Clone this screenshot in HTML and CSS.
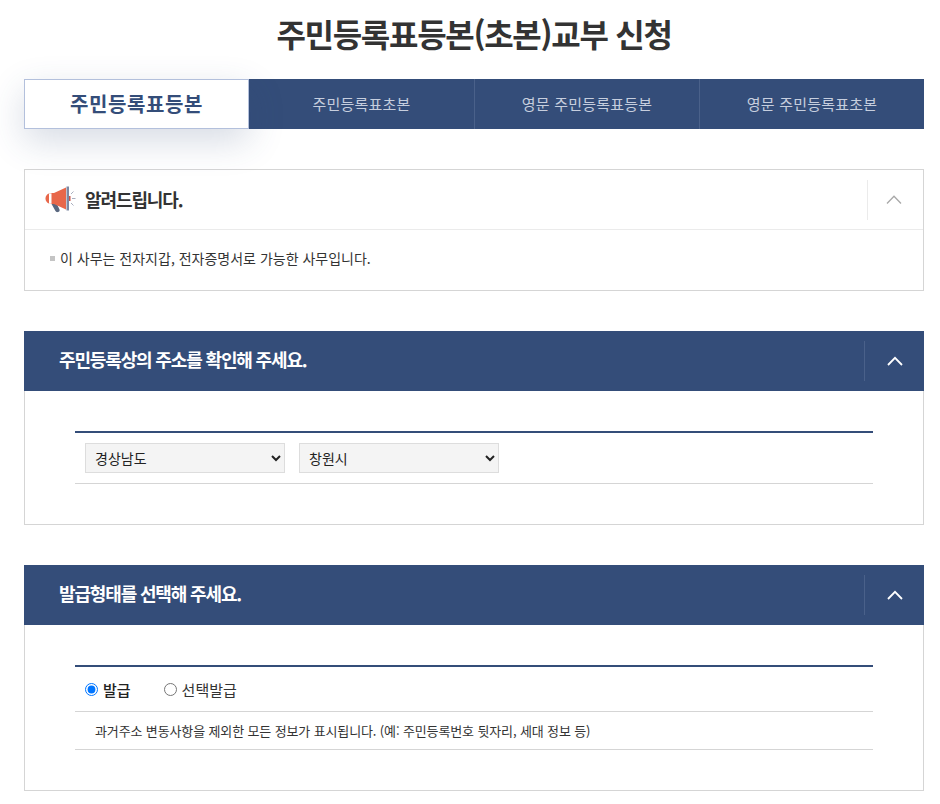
FILE: index.html
```html
<!DOCTYPE html>
<html lang="ko">
<head>
<meta charset="utf-8">
<title>주민등록표등본(초본)교부 신청</title>
<link rel="stylesheet" href="styles.css">
</head>
<body>
<main class="page">
  <h1 class="title">주민등록표등본(초본)교부 신청</h1>
  <ul class="tabs">
    <li class="tab active">주민등록표등본</li>
    <li class="tab">주민등록표초본</li>
    <li class="tab">영문 주민등록표등본</li>
    <li class="tab">영문 주민등록표초본</li>
  </ul>

  <section class="notice">
    <header class="notice-head">
      <svg class="mega" width="32" height="28" viewBox="0 0 32 28" aria-hidden="true">
        <path d="M7 18l5-1 3.500 7.500c.5 1.200-.2 2.300-1.500 2.600-1.200.3-2.200-.2-2.700-1.300z" fill="#59677f"/>
        <path d="M7 8h3v11H7c-3 0-5.500-2.400-5.500-5.500S4 8 7 8z" fill="#e8674a"/>
        <path d="M5 8.300h2.500v10.500H5z" fill="#fff"/>
        <path d="M10 8l12-5.500v22L10 19z" fill="#e8674a"/>
        <path d="M22.500 1.500h2.500v24h-2.500z" fill="#7c89a3"/>
        <path d="M25 11h1.500v5H25z" fill="#c9574a"/>
        <path d="M27 9l2.500-2.500M28 13.500h3.500M27 18l2.500 2.500" stroke="#a0a6b8" stroke-width=".9" fill="none"/>
      </svg>
      <h2 class="notice-title">알려드립니다.</h2>
      <span class="toggle toggle-light">
        <svg width="16" height="9" viewBox="0 0 16 9" aria-hidden="true"><path d="M1 8.500L8 1.200l7 7.300" fill="none" stroke="#a8a8a8" stroke-width="1.300"/></svg>
      </span>
    </header>
    <div class="notice-body">
      <p class="notice-item">이 사무는 전자지갑, 전자증명서로 가능한 사무입니다.</p>
    </div>
  </section>

  <section class="panel">
    <header class="panel-head">
      <h2 class="panel-title">주민등록상의 주소를 확인해 주세요.</h2>
      <span class="toggle toggle-dark">
        <svg width="16" height="10" viewBox="0 0 16 10" aria-hidden="true"><path d="M1 9L8 1.800 15 9" fill="none" stroke="#fff" stroke-width="1.800"/></svg>
      </span>
    </header>
    <div class="panel-body">
      <div class="form-table">
        <div class="row row-select">
          <select class="select"><option>경상남도</option></select>
          <select class="select"><option>창원시</option></select>
        </div>
      </div>
    </div>
  </section>

  <section class="panel">
    <header class="panel-head">
      <h2 class="panel-title">발급형태를 선택해 주세요.</h2>
      <span class="toggle toggle-dark">
        <svg width="16" height="10" viewBox="0 0 16 10" aria-hidden="true"><path d="M1 9L8 1.800 15 9" fill="none" stroke="#fff" stroke-width="1.800"/></svg>
      </span>
    </header>
    <div class="panel-body">
      <div class="form-table">
        <div class="row row-radio">
          <label class="radio radio-on"><input type="radio" name="kind" checked>발급</label>
          <label class="radio"><input type="radio" name="kind">선택발급</label>
        </div>
        <div class="row row-desc">과거주소 변동사항을 제외한 모든 정보가 표시됩니다. (예: 주민등록번호 뒷자리, 세대 정보 등)</div>
      </div>
    </div>
  </section>
</main>
</body>
</html>
```

FILE: styles.css
```css
* { box-sizing: border-box; }
html, body { margin: 0; padding: 0; background: #fff; }
body {
  font-family: "Noto Sans CJK KR", "Noto Sans", "Liberation Sans", sans-serif;
  color: #333;
  overflow: hidden;
  height: 804px;
}
.page { width: 900px; margin-left: 24px; }
.title {
  margin: 0;
  height: 79px;
  padding-top: 7px;
  font-size: 32px;
  line-height: 52px;
  font-weight: 700;
  letter-spacing: -1.3px;
  text-align: center;
  color: #333;
}
.tabs {
  list-style: none;
  margin: 0 0 40px;
  padding: 0;
  display: flex;
  height: 50px;
  background: #344d79;
}
.tab {
  flex: 1 1 25%;
  display: flex;
  align-items: center;
  justify-content: center;
  padding-bottom: 2px;
  font-size: 15px;
  letter-spacing: .2px;
  color: #c6cede;
  border-left: 1px solid #4a618a;
}
.tab:nth-child(2) { border-left: 0; }
.tab.active {
  background: #fff;
  border: 1px solid #b3c0dc;
  color: #344d79;
  font-size: 20px;
  font-weight: 700;
  letter-spacing: .6px;
  box-shadow: 0 12px 36px rgba(52, 77, 121, .2);
}
.notice {
  border: 1px solid #d5d5d5;
  height: 122px;
  margin-bottom: 40px;
}
.notice-head {
  display: flex;
  align-items: center;
  height: 60px;
  padding-left: 19px;
  border-bottom: 1px solid #ebebeb;
}
.mega { flex: none; margin-bottom: 1px; }
.notice-title {
  margin: 0 0 2px 9px;
  font-size: 18px;
  font-weight: 700;
  letter-spacing: -1.1px;
  color: #333;
}
.toggle {
  margin-left: auto;
  display: flex;
  align-items: center;
  justify-content: center;
  flex: none;
}
.toggle-light {
  width: 55px;
  height: 40px;
  margin-right: 1px;
  padding-right: 3px;
  border-left: 1px solid #ebebeb;
}
.notice-body { padding: 18px 25px; }
.notice-item {
  margin: 0;
  display: flex;
  align-items: center;
  font-size: 14px;
  line-height: 20px;
  color: #333;
}
.notice-item::before {
  content: "";
  width: 5px;
  height: 5px;
  margin-right: 5px;
  background: #c4c4c4;
}
.panel { border: 1px solid #d5d5d5; border-top: 0; margin-bottom: 40px; }
.panel-head {
  display: flex;
  align-items: center;
  height: 60px;
  margin: 0 -1px;
  padding-left: 35px;
  background: #344d79;
}
.panel-title {
  margin: 0 0 4px;
  font-size: 18px;
  font-weight: 700;
  letter-spacing: -1.15px;
  color: #fff;
}
.toggle-dark {
  width: 60px;
  height: 40px;
  border-left: 1px solid #4a618a;
}
.panel-body { padding: 40px 50px; }
.form-table { border-top: 2px solid #344d79; }
.row { border-bottom: 1px solid #d5d5d5; }
.row-select {
  display: flex;
  gap: 14px;
  align-items: center;
  height: 51px;
  padding-left: 10px;
}
.select {
  width: 200px;
  height: 30px;
  padding: 0 5px;
  border: 1px solid #ddd;
  border-radius: 0;
  background: #f4f4f4;
  font-family: inherit;
  font-size: 14px;
  color: #222;
}
.row-radio {
  display: flex;
  align-items: center;
  height: 45px;
  padding-left: 10px;
}
.radio {
  display: flex;
  align-items: center;
  margin-right: 25px;
  font-size: 15px;
  color: #333;
}
.radio-on { margin-right: 33px; font-weight: 500; color: #222; }
.radio input { margin: 0 5px 0 0; width: 13px; height: 13px; }
.row-desc {
  height: 38px;
  padding-left: 20px;
  font-size: 13px;
  line-height: 37px;
  letter-spacing: -.13px;
  color: #333;
}
```
